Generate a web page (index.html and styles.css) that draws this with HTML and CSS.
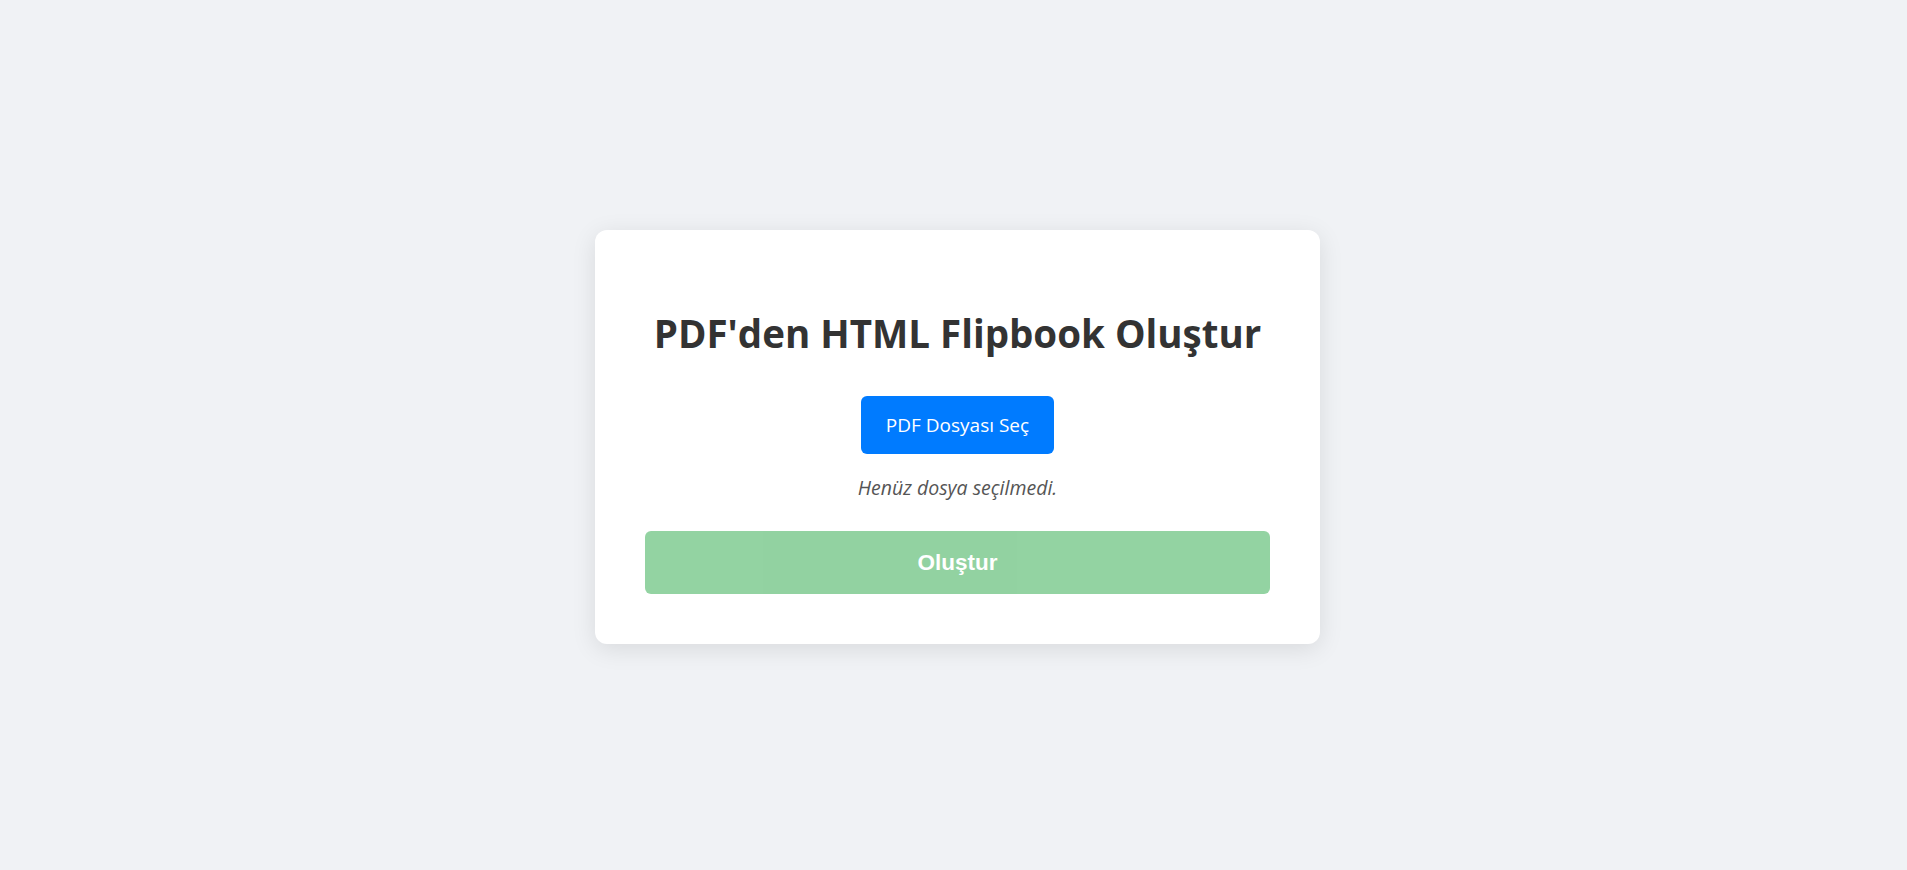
FILE: index.html
```html
<!DOCTYPE html>
<html lang="tr">
<head>
<meta charset="utf-8">
<title>PDF'den HTML Flipbook Oluştur</title>
<link rel="stylesheet" href="styles.css">
</head>
<body>
<main class="card">
  <h1 class="title">PDF'den HTML Flipbook Oluştur</h1>
  <label class="file-btn">PDF Dosyası Seç</label>
  <p class="file-name">Henüz dosya seçilmedi.</p>
  <button class="submit" disabled>Oluştur</button>
</main>
</body>
</html>
```
FILE: styles.css
```css
html, body {
  margin: 0;
  padding: 0;
}
body {
  background: #f0f2f5;
  font-family: "Open Sans", "Noto Sans", sans-serif;
  color: #333;
  min-height: 100vh;
  display: flex;
  align-items: center;
  justify-content: center;
}
.card {
  box-sizing: border-box;
  width: 725px;
  padding: 50px;
  background: #fff;
  border-radius: 12px;
  box-shadow: 0 5px 25px rgba(0, 0, 0, 0.1);
  display: flex;
  flex-direction: column;
  align-items: center;
  margin-left: 8px;
  margin-top: 4px;
}
.title {
  margin: 28px 0 0;
  font-size: 38.5px;
  font-weight: 700;
  line-height: 50px;
  color: #333;
  letter-spacing: 0;
}
.file-btn {
  margin-top: 38px;
  display: inline-block;
  background: #007bff;
  color: #fff;
  font-size: 19px;
  line-height: 28px;
  padding: 15px 25px;
  border-radius: 6px;
}
.file-name {
  margin: 21px 0 0;
  font-size: 19.5px;
  line-height: 26px;
  font-style: italic;
  color: #555;
}
.submit {
  margin-top: 30px;
  width: 100%;
  height: 63px;
  border: none;
  border-radius: 6px;
  background: #28a745;
  opacity: 0.5;
  color: #fff;
  font-family: "Liberation Sans", Arial, sans-serif;
  font-size: 22.5px;
  font-weight: 700;
}
```
